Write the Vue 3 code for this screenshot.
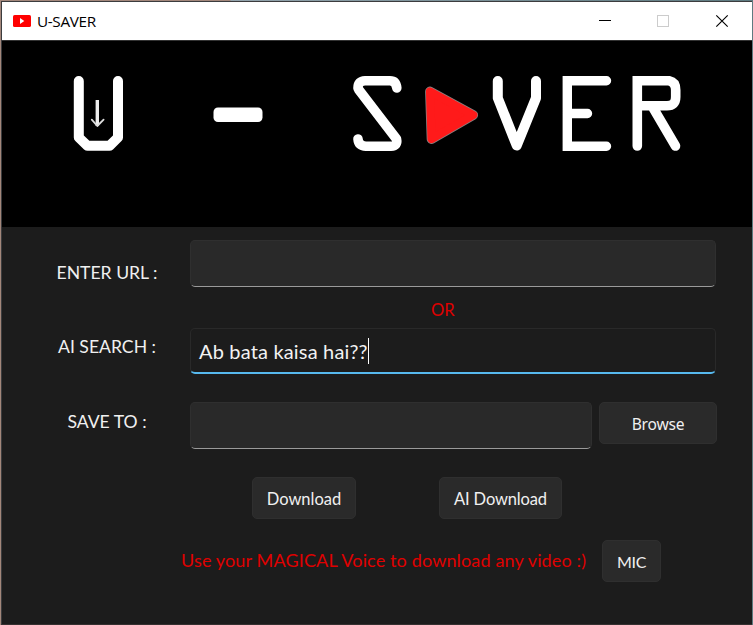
<script setup>
import { ref } from 'vue'

const url = ref('')
const search = ref('Ab bata kaisa hai??')
const folder = ref('')
</script>

<template>
  <div class="desktop">
    <div class="window">
      <header class="titlebar">
        <svg class="app-icon" width="18" height="12" viewBox="0 0 18 12">
          <rect width="18" height="12" rx="1.6" fill="#f00" />
          <path d="M7 3.1 L11.3 6 L7 8.9 Z" fill="#fff" />
        </svg>
        <span class="title">U-SAVER</span>
        <svg class="controls" width="147" height="38" viewBox="0 0 147 38" fill="none" shape-rendering="crispEdges">
          <path d="M14 18.5 H26" stroke="#000" />
          <rect x="72.500" y="13.500" width="11" height="11" stroke="#ccc" />
          <path d="M131.300 13.300 L142.700 24.700 M142.700 13.300 L131.300 24.700" stroke="#000" stroke-width="1.15" shape-rendering="auto" />
        </svg>
      </header>

      <div class="banner">
        <svg width="750" height="186" viewBox="2 41 750 186" fill="none" stroke="#fff" stroke-width="10" stroke-linecap="round" stroke-linejoin="round">
          <path d="M78.800 81 V137.500 L87.500 145.800 H109.500 L118 137.500 V81" />
          <path d="M97.300 100 V126" stroke="#eee" stroke-width="3.400" stroke-linecap="butt" />
          <path d="M91.800 119.600 L97.300 126 L103.600 119.600" stroke="#ddd" stroke-width="1.800" />
          <rect x="213.500" y="107.500" width="49" height="14.500" rx="4.500" fill="#fff" stroke="none" />
          <path d="M396.800 88 Q396 80.800 390 80.800 H365 Q358 81 358 88 L359 90 L396.500 139 Q398 146 391 146.200 H366 Q358.500 146 358 139" stroke-width="9.600" />
          <path d="M430 91.500 L473.200 115 L431.600 139 Z" fill="#ff1a1a" stroke="#8a8080" stroke-width="9.800" />
          <path d="M430 91.500 L473.200 115 L431.600 139 Z" fill="#ff1a1a" stroke="#ff1a1a" stroke-width="8.200" />
          <path d="M497.800 81 V98 L516.700 145.500 L536 98 V81" />
          <path d="M606.500 80.700 H567.300 V146.300 H606.500 M567.300 113.500 H587.500" stroke-width="9.400" stroke-linejoin="miter" />
          <path d="M637.300 146 V80.700 H669 Q675.700 82 675.700 90 V97 Q675.700 105.700 667 105.700 H638 M652 106 L675.500 146" stroke-width="9.600" stroke-linejoin="miter" />
        </svg>
      </div>

      <main class="form">
        <div class="row row-url">
          <label class="label url-label">ENTER URL :</label>
          <div class="field">{{ url }}</div>
        </div>
        <div class="or">OR</div>
        <div class="row row-search">
          <label class="label search-label">AI SEARCH :</label>
          <div class="field focused"><span class="entry">{{ search }}</span><i class="caret"></i></div>
        </div>
        <div class="row row-save">
          <label class="label save-label">SAVE TO :</label>
          <div class="field">{{ folder }}</div>
          <button class="btn browse">Browse</button>
        </div>
        <div class="actions">
          <button class="btn download">Download</button>
          <button class="btn ai">AI Download</button>
        </div>
        <div class="voice">
          <span class="hint">Use your MAGICAL Voice to download any video :)</span>
          <button class="btn mic">MIC</button>
        </div>
      </main>
    </div>
  </div>
</template>

<style>
body {
  margin: 0;
  overflow: hidden;
}
</style>

<style scoped>
.desktop {
  box-sizing: border-box;
  width: 753px;
  height: 625px;
  padding: 1px 1px 0 1px;
  background: linear-gradient(90deg, #a3877b 0, #a3877b 230px, #93a4ad 231px, #5d7a80 100%);
}
.window {
  box-sizing: border-box;
  width: 751px;
  height: 624px;
  border: 1px solid #3c3c3e;
  border-right: 0;
  border-bottom-color: #353030;
  background: #1c1c1c;
  font-family: Lato, "Liberation Sans", sans-serif;
}
.titlebar {
  display: flex;
  align-items: center;
  height: 38px;
  padding-left: 11px;
  background: #fff;
  border-bottom: 1px solid #333;
}
.title {
  margin-left: 6px;
  color: #000;
  font: 15.3px/20px "Open Sans", sans-serif;
  letter-spacing: -0.35px;
}
.controls {
  margin-left: auto;
  margin-right: 20px;
}
.banner {
  height: 186px;
  background: #000;
  overflow: hidden;
}
.banner svg {
  display: block;
}
.form {
  padding-top: 13px;
}
.row {
  display: flex;
  align-items: flex-start;
}
.label {
  box-sizing: border-box;
  width: 188px;
  padding: 21px 0 0 22px;
  text-align: center;
  white-space: nowrap;
  color: #f0f0f0;
  font-size: 17.6px;
  line-height: 24px;
}
.search-label {
  padding-top: 7px;
}
.field {
  box-sizing: border-box;
  width: 526px;
  height: 47px;
  border: 1px solid #2f2f2f;
  border-bottom-color: #9a9a9a;
  border-radius: 5px;
  background: #292929;
}
.or {
  height: 41px;
  padding-left: 429px;
  color: #e00000;
  font-size: 16.5px;
  line-height: 46px;
}
.focused {
  display: flex;
  align-items: center;
  height: 46px;
  padding-left: 8px;
  background: #1c1c1c;
  border-color: #292929;
  border-bottom: 2px solid #57b9ee;
}
.entry {
  color: #f2f2f2;
  font-size: 20px;
  line-height: 28px;
  letter-spacing: 0.17px;
}
.caret {
  width: 1px;
  height: 26px;
  background: #fff;
}
.row-save {
  margin-top: 28px;
}
.save-label {
  padding-top: 8px;
}
.row-save .field {
  width: 402px;
}
.btn {
  box-sizing: border-box;
  height: 42px;
  padding: 2px 0 0;
  border: 1px solid #2f2f2f;
  border-radius: 5px;
  background: #2a2a2a;
  color: #f0f0f0;
  font: 16.5px/24px Lato, sans-serif;
  white-space: nowrap;
}
.browse {
  width: 118px;
  margin-left: 7px;
  font-family: "Noto Sans", sans-serif;
  font-size: 15.6px;
  letter-spacing: -0.2px;
}
.actions {
  display: flex;
  gap: 83px;
  margin-top: 28px;
  padding-left: 250px;
}
.download {
  width: 104px;
}
.ai {
  width: 123px;
  letter-spacing: -0.15px;
}
.voice {
  display: flex;
  margin-top: 21px;
  padding-left: 179px;
}
.hint {
  width: 421px;
  color: #e00000;
  font-size: 18px;
  line-height: 40px;
  letter-spacing: 0.14px;
  white-space: nowrap;
}
.mic {
  width: 59px;
  font-size: 16px;
  letter-spacing: -0.3px;
}
</style>
